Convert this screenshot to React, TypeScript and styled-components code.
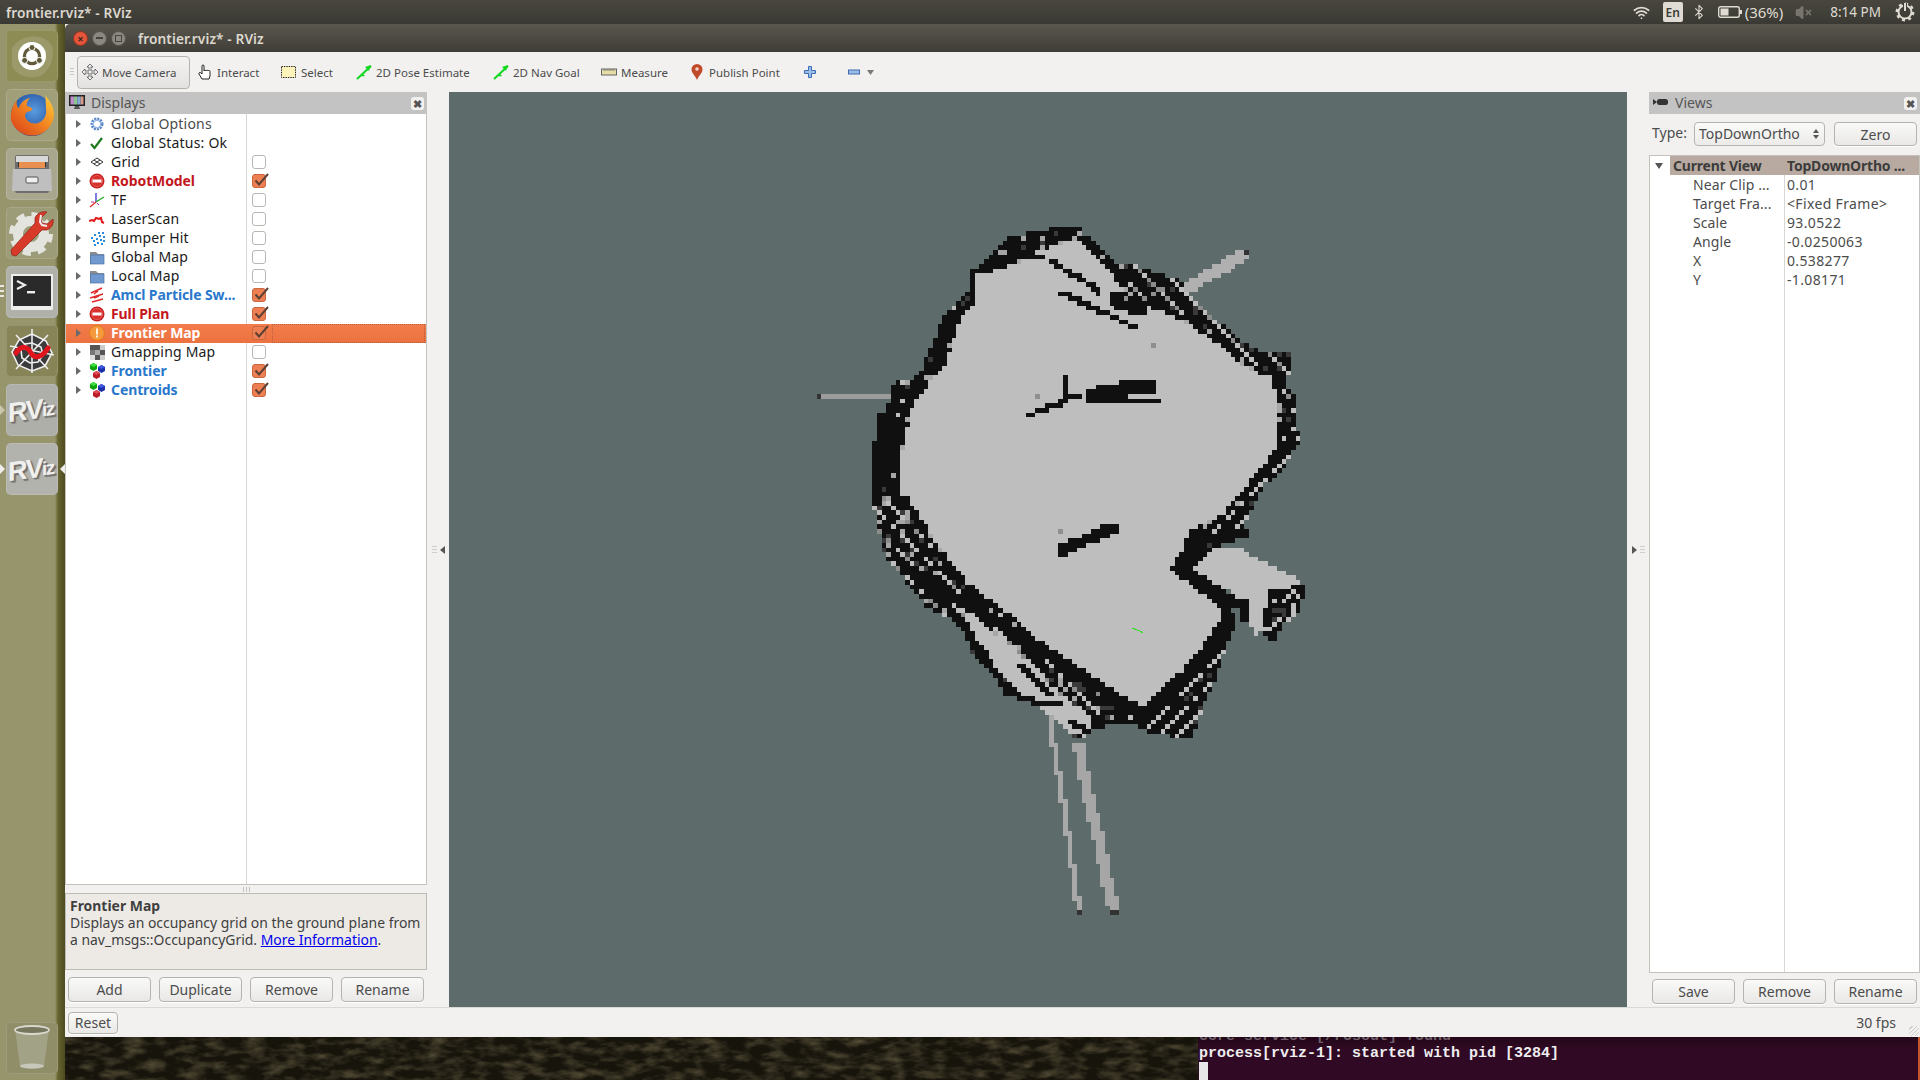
import React, { useMemo } from "react";
import styled, { createGlobalStyle } from "styled-components";
import { Wifi, Bluetooth, VolumeX } from "lucide-react";

const Global = createGlobalStyle`
  html, body { margin: 0; padding: 0; width: 1920px; height: 1080px; overflow: hidden; background: #1c1810; }
  * { box-sizing: border-box; }
`;
const UI = `"Noto Sans", "Open Sans", sans-serif`;

const Root = styled.div`
  width: 1920px; height: 1080px; display: flex; flex-direction: column; overflow: hidden; font-family: ${UI};
`;
const TopPanel = styled.header`
  height: 24px; flex: none; display: flex; align-items: center; padding: 0 5px 0 6px;
  background: linear-gradient(#48463f, #3a3933); color: #dfdbd2;
`;
const PanelTitle = styled.span`font-size: 13.7px; font-weight: 600; letter-spacing: .1px; color: #dcd8cf;`;
const Indicators = styled.div`margin-left: auto; display: flex; align-items: center; height: 24px; color: #dfdbd2; font-size: 14px;`;
const LangBox = styled.span`
  width: 20px; height: 20px; background: #dfdbd2; color: #3c3b37; border-radius: 2px; font-size: 12px; font-weight: 600;
  display: flex; align-items: center; justify-content: center; margin: 0 8px 0 13px;
`;
const IndicatorText = styled.span<{ $l: number; $r: number; $s?: number }>`margin: 0 ${p => p.$r}px 0 ${p => p.$l}px; white-space: nowrap; font-size: ${p => p.$s ?? 13.5}px;`;
const Body = styled.div`flex: 1; display: flex; min-height: 0;`;
const Launcher = styled.nav`
  width: 65px; flex: none; display: flex; flex-direction: column; padding: 6px 7px 6px 6px; gap: 7px;
  background: linear-gradient(90deg, #96956b 0, #96956b 55px, #66642f 58px, #4d4b20 65px);
`;
const Tile = styled.div<{ $bg: string }>`
  width: 52px; height: 52px; flex: none; border-radius: 5px; position: relative; background: ${p => p.$bg};
  display: flex; align-items: center; justify-content: center; box-shadow: inset 0 0 0 1px rgba(255,255,255,.12);
`;
const TrashTile = styled(Tile)`margin-top: auto;`;
const Pip = styled.span<{ $side: "l" | "r"; $hollow?: boolean }>`
  position: absolute; top: 21px; ${p => p.$side === "l" ? "left: -6px" : "right: -7px"}; width: 0; height: 0;
  border-top: 5px solid transparent; border-bottom: 5px solid transparent;
  ${p => p.$side === "l" ? `border-left: 5px solid ${p.$hollow ? "#c9c8ae" : "#eee"}` : "border-right: 5px solid #eee"};
`;
const PipDots = styled.span`
  position: absolute; left: -6px; top: 19px; width: 4px; height: 12px;
  background: repeating-linear-gradient(#e8e8e0 0 2px, transparent 2px 5px);
`;
const RvizMark = styled.span`
  display: flex; align-items: flex-end; transform: skewY(-8deg); font-family: "Liberation Sans", sans-serif; font-weight: 700;
  color: #f0f0ee; text-shadow: 1px 1px 0 #777, 2px 2px 1px #6a6a6a; letter-spacing: -1.5px; padding-right: 2px;
`;
const RvizBig = styled.span`font-size: 27px; line-height: 28px;`;
const RvizSmall = styled.span`font-size: 19px; line-height: 24px;`;
const Main = styled.div`flex: 1; display: flex; flex-direction: column; min-width: 0;`;
const Win = styled.div`height: 1013px; flex: none; display: flex; flex-direction: column; background: #f2f1f0;`;
const TitleBar = styled.div`
  height: 28px; flex: none; display: flex; align-items: center; padding-left: 8px;
  background: linear-gradient(#5a574e, #3f3d37); border-top-left-radius: 5px;
`;
const WinBtn = styled.span<{ $bg: string }>`
  width: 15px; height: 15px; border-radius: 50%; background: ${p => p.$bg}; margin-right: 4px; border: 1px solid rgba(0,0,0,.35);
  display: flex; align-items: center; justify-content: center; color: #3b2a20; font-size: 11px; line-height: 1; font-weight: 700;
`;
const WinDash = styled.span`width: 7px; height: 2px; background: #45433d;`;
const WinSquare = styled.span`width: 7px; height: 7px; border: 1px solid #45433d;`;
const WinTitle = styled.span`margin-left: 8px; font-size: 13.7px; font-weight: 600; color: #dcd8cf; letter-spacing: .1px;`;
const ToolBar = styled.div`height: 40px; flex: none; display: flex; align-items: center; padding-left: 5px; color: #4c4c4c; font-size: 11.5px;`;
const Handle = styled.span`width: 4px; height: 9px; margin-right: 3px; background: repeating-linear-gradient(#c8c6c2 0 1px, transparent 1px 3px);`;
const MoveBtn = styled.div`
  width: 113px; height: 33px; display: flex; align-items: center; gap: 4px; padding-left: 4px; margin-right: 7px;
  border: 1px solid #b5b3ae; border-radius: 4px; background: linear-gradient(#f4f3f2, #e3e2e0);
`;
const Tool = styled.div<{ $w: number; $gap?: number }>`width: ${p => p.$w}px; flex: none; display: flex; align-items: center; gap: ${p => p.$gap ?? 4}px; white-space: nowrap;`;
const Work = styled.div`height: 915px; flex: none; display: flex;`;
const Dock = styled.section<{ $w: number }>`width: ${p => p.$w}px; flex: none; display: flex; flex-direction: column;`;
const DockTitle = styled.div`
  height: 22px; flex: none; display: flex; align-items: center; gap: 6px; padding: 0 0 2px 4px; background: #c3c3c3;
  color: #555; font-size: 14px; position: relative;
`;
const CloseBtn = styled.span`
  position: absolute; right: 3px; top: 5px; width: 13px; height: 13px; border-radius: 3px; background: #f2f1f0;
  display: flex; align-items: center; justify-content: center; color: #555; font-size: 11px; font-weight: 800; line-height: 1;
`;
const Tree = styled.div`
  height: 771px; flex: none; background: #fff; border: 1px solid #c4c2bd; border-top: 0; position: relative; font-size: 14px; padding-top: 1px; line-height: 18px;
`;
const ColLine = styled.span<{ $x: number }>`position: absolute; top: 0; bottom: 0; left: ${p => p.$x}px; width: 1px; background: #d8d6d2;`;
const Row = styled.div<{ $sel?: boolean }>`
  height: 19px; display: flex; align-items: center; position: relative; padding-bottom: 1px;
  background: ${p => p.$sel ? "linear-gradient(#f37c4c, #ec7240)" : "transparent"};
`;
const Arrow = styled.span<{ $down?: boolean }>`
  width: 0; height: 0; flex: none;
  ${p => p.$down ? `border-left: 4px solid transparent; border-right: 4px solid transparent; border-top: 6px solid #555;` :
    `border-top: 4px solid transparent; border-bottom: 4px solid transparent; border-left: 5px solid #6a6a6a;`}
`;
const ArrowSlot = styled.span`width: 23px; flex: none; display: flex; justify-content: flex-end; padding-right: 8px;`;
const IconSlot = styled.span`width: 22px; height: 17px; flex: none; display: flex; align-items: center;`;
const Label = styled.span<{ $c: string; $b?: boolean }>`
  width: 135px; flex: none; white-space: nowrap; color: ${p => p.$c}; font-weight: ${p => p.$b ? 700 : 400};
  letter-spacing: ${p => p.$b ? "-.1px" : ".2px"};
`;
const CheckCell = styled.span<{ $sel?: boolean }>`
  width: 179px; flex: none; padding-left: 6px; height: 18px; display: flex; align-items: center; position: relative;
`;
const Focus = styled.span`position: absolute; left: 26px; right: 0; top: 0; bottom: -1px; border: 1px dotted #b3603a;`;
const Box = styled.span<{ $on?: boolean }>`
  width: 14px; height: 14px; border-radius: 3px; position: relative; display: block; flex: none;
  background: ${p => p.$on ? "#ee7f52" : "#fff"}; border: 1px solid ${p => p.$on ? "#c9673f" : "#b9b7b2"};
`;
const Tick = styled.svg`position: absolute; left: 0; top: -3px;`;
const Grip = styled.div`height: 8px; flex: none; display: flex; justify-content: center; align-items: center;`;
const GripMark = styled.span`width: 7px; height: 5px; background: repeating-linear-gradient(90deg, #c3c1bc 0 1px, transparent 1px 3px);`;
const Help = styled.div`
  height: 77px; flex: none; background: #edeae6; border: 1px solid #bdbbb6; padding: 3px 4px; font-size: 13.95px; line-height: 17px; color: #3f3f3f; white-space: nowrap;
`;
const HelpHead = styled.div`font-weight: 700;`;
const HelpLink = styled.a`color: #0000ee; text-decoration: underline;`;
const BtnRow = styled.div<{ $pt: number; $pl: number }>`display: flex; gap: 8px; padding: ${p => p.$pt}px 0 0 ${p => p.$pl}px;`;
const Btn = styled.button<{ $w?: number; $h?: number }>`
  width: ${p => p.$w ?? 83}px; height: ${p => p.$h ?? 25}px; padding: 0; flex: none; border: 1px solid #b5b3ae; border-radius: 4px;
  background: linear-gradient(#f9f9f8, #e9e8e6); color: #4c4c4c; font-family: ${UI}; font-size: 14px; box-shadow: 0 1px 0 #fff;
`;
const Splitter = styled.div<{ $w: number }>`width: ${p => p.$w}px; flex: none; display: flex; align-items: center; justify-content: center; gap: 3px;`;
const SplitArrow = styled.span<{ $dir: "l" | "r" }>`
  width: 0; height: 0; border-top: 4px solid transparent; border-bottom: 4px solid transparent;
  ${p => p.$dir === "l" ? "border-right: 5px solid #555" : "border-left: 5px solid #555"};
`;
const SplitGrip = styled.span`width: 5px; height: 8px; background: repeating-linear-gradient(#cfcdc9 0 1px, transparent 1px 3px);`;
const Viewport = styled.div`width: 1178px; flex: none; background: #5d6b6b; overflow: hidden;`;
const MapSvg = styled.svg`display: block;`;
const TypeRow = styled.div`height: 41px; flex: none; display: flex; align-items: flex-start; padding: 8px 0 0 3px; color: #4c4c4c; font-size: 14px; line-height: 22px;`;
const TypeLabel = styled.span`width: 42px; flex: none;`;
const Combo = styled.div`
  width: 131px; height: 24px; flex: none; margin-right: 9px; border: 1px solid #b5b3ae; border-radius: 4px; background: linear-gradient(#fafafa, #ecebe9);
  display: flex; align-items: center; justify-content: space-between; padding: 0 5px 0 4px; font-size: 14px;
`;
const Spin = styled.span`display: flex; flex-direction: column; gap: 2px;`;
const SpinUp = styled.span`width: 0; height: 0; border: 3px solid transparent; border-top: 0; border-bottom: 4px solid #555;`;
const SpinDown = styled.span`width: 0; height: 0; border: 3px solid transparent; border-bottom: 0; border-top: 4px solid #555;`;
const ViewTree = styled(Tree)`height: 818px; border-top: 1px solid #c4c2bd; padding-top: 0;`;
const ViewHead = styled.div`
  height: 19px; display: flex; align-items: center; font-weight: 700; color: #3c3c3c; position: relative; font-size: 14px;
`;
const HeadArrowSlot = styled.span`width: 20px; flex: none; display: flex; justify-content: center; padding-right: 2px;`;
const HeadCell = styled.span<{ $w: number }>`width: ${p => p.$w}px; flex: none; background: #b8aaa0; height: 19px; line-height: 19px; padding-left: 3px; white-space: nowrap; overflow: hidden; letter-spacing: -.2px;`;
const ViewRow = styled.div`height: 19px; display: flex; align-items: center; color: #4c4c4c;`;
const ViewKey = styled.span`width: 134px; flex: none; padding-left: 43px; white-space: nowrap; letter-spacing: .1px;`;
const ViewVal = styled.span`padding-left: 3px; white-space: nowrap; letter-spacing: .35px;`;
const Status = styled.footer`
  height: 30px; flex: none; border-top: 1px solid #dbd9d5; display: flex; align-items: center; padding: 0 24px 0 3px; justify-content: space-between; position: relative;
  color: #4c4c4c; font-size: 14px;
`;
const SizeGrip = styled.span`
  position: absolute; right: 1px; bottom: 1px; width: 10px; height: 10px;
  background: repeating-linear-gradient(135deg, transparent 0 2px, #cfcdc9 2px 3px);
`;
const Bottom = styled.div`height: 43px; flex: none; display: flex;`;
const Wallpaper = styled.div`width: 1133px; flex: none; background: #17140c; overflow: hidden;`;
const Terminal = styled.div`
  flex: 1; position: relative; overflow: hidden; background: linear-gradient(#230718, #300a24 12px); border-right: 2px solid #c4552c;
  font-family: "Liberation Mono", monospace; font-size: 15px; font-weight: 700; line-height: 17px; color: #eee;
  padding-left: 1px;
`;
const Clipped = styled.div`margin-top: -9px; color: #6e5d68;`;
const Cursor = styled.div`width: 9px; height: 18px; background: #e8e8e8;`;

/* ------------- occupancy map --------------- */
type Pt = [number, number];
const OUTER: Pt[] = [[1078,225],[1083,233],[1117,262],[1145,268],[1179,280],[1190,297],[1210,315],[1245,343],[1265,352],[1290,350],[1291,367],[1286,387],[1297,400],[1293,427],[1302,437],[1293,450],[1283,470],[1262,487],[1248,515],[1243,535],[1213,548],[1237,625],[1227,643],[1215,680],[1203,707],[1193,737],[1180,737],[1153,733],[1127,723],[1100,727],[1093,727],[1087,738],[1077,741],[1067,733],[1060,713],[1033,703],[1002,695],[1000,680],[987,670],[968,648],[970,635],[957,623],[927,607],[903,577],[887,557],[881,543],[876,520],[871,483],[874,467],[883,443],[888,407],[895,380],[919,377],[924,360],[938,333],[941,317],[969,293],[969,273],[991,255],[1007,237],[1059,227]];
const INNER: Pt[] = [[1083,238],[1110,265],[1131,297],[1179,315],[1214,337],[1245,363],[1276,377],[1281,417],[1281,447],[1245,493],[1224,517],[1190,533],[1186,550],[1174,567],[1207,590],[1227,613],[1210,640],[1190,667],[1143,712],[1100,690],[1050,653],[1003,613],[967,587],[940,553],[907,503],[897,493],[898,467],[902,433],[912,400],[942,363],[958,317],[974,297],[974,273],[1010,263],[1041,247],[1079,235]];
const LOBE: Pt[] = [[1213,548],[1237,547],[1300,580],[1305,590],[1268,592],[1262,628],[1258,638],[1247,622],[1243,600],[1193,570]];
const SWLIGHT: Pt[] = [[960,603],[1003,640],[1063,697],[1093,717],[1087,733],[1067,731],[1010,680],[975,638]];
const PATCH: Pt[] = [[1268,590],[1305,585],[1300,612],[1285,622],[1274,640],[1262,636],[1265,610]];
const WALLS: { pts: Pt[]; t: number }[] = [
  { pts: INNER.concat([INNER[0]]), t: 1 },
  { pts: [[1062,293],[1093,307],[1136,328]], t: 1 },
  { pts: [[1053,263],[1086,282],[1100,292]], t: 1 },
  { pts: [[1118,300],[1140,308]], t: 3 },
  { pts: [[1028,415],[1064,402],[1067,380]], t: 1 },
  { pts: [[1065,395],[1079,395]], t: 1 },
  { pts: [[1093,397],[1117,390],[1147,387]], t: 3 },
  { pts: [[1102,402],[1160,402]], t: 1 },
  { pts: [[1059,548],[1112,525]], t: 2 },
  { pts: [[1014,257],[1041,255]], t: 1 },
  { pts: [[903,567],[1000,622],[1140,713]], t: 2 },
  { pts: [[1177,567],[1213,593],[1243,603],[1243,617]], t: 2 },
  { pts: [[1227,623],[1170,690],[1143,713]], t: 2 },
  { pts: [[1240,532],[1190,540],[1180,560]], t: 2 },
  { pts: [[885,420],[878,480]], t: 3 },
  { pts: [[950,612],[975,642],[1003,684],[1006,693],[1040,703],[1062,705]], t: 1 },
  { pts: [[1020,665],[1052,695]], t: 1 },
  { pts: [[1070,722],[1088,730]], t: 1 },
];
const RAYS: { pts: Pt[]; t: number; c: string }[] = [
  { pts: [[1186,285],[1215,268],[1244,250]], t: 2, c: "#b0b0b0" },
  { pts: [[821,396],[852,396],[900,399]], t: 1, c: "#9c9c9c" },
  { pts: [[1050,713],[1054,745],[1063,800],[1068,835],[1076,890],[1078,908]], t: 1, c: "#a8a8a8" },
  { pts: [[1077,745],[1085,790],[1097,840],[1105,880],[1113,910]], t: 2, c: "#a6a6a6" },
];
const TIPS: Pt[] = [[1247,250],[1078,911],[1113,914],[1116,914],[818,396]];
const GRAY: Pt[] = [[1038,395],[1060,529],[1128,300],[1152,345],[1156,292],[1162,290]];
const C = 4.65, X0 = 812, Y0 = 222;

const inside = (p: Pt, poly: Pt[]) => {
  let c = false;
  for (let a = 0, b = poly.length - 1; a < poly.length; b = a++) {
    const [xa, ya] = poly[a], [xb, yb] = poly[b];
    if ((ya > p[1]) !== (yb > p[1]) && p[0] < ((xb - xa) * (p[1] - ya)) / (yb - ya) + xa) c = !c;
  }
  return c;
};
const rnd = (i: number, j: number) => {
  let h = Math.imul(i + 31, 73856093) ^ Math.imul(j + 17, 19349663);
  h = Math.imul(h ^ (h >>> 13), 1274126177);
  return (((h ^ (h >>> 16)) >>> 0) % 1000) / 1000;
};
const buildMap = () => {
  const cells = new Map<string, string>();
  const key = (i: number, j: number) => `${i},${j}`;
  const L = "#bebebe", B = "#101010";
  for (let j = 0; j < 115; j++) for (let i = 0; i < 110; i++) {
    const p: Pt = [X0 + (i + .5) * C, Y0 + (j + .5) * C];
    const r = rnd(i, j);
    if (inside(p, PATCH)) { cells.set(key(i, j), r < .72 ? B : r < .85 ? "#3a3a3a" : L); continue; }
    if (inside(p, INNER) || inside(p, LOBE) || inside(p, SWLIGHT)) { cells.set(key(i, j), L); continue; }
    if (!inside(p, OUTER)) continue;
    let c = B;
    const se = p[0] > 1140 && p[1] > 450;
    const sw = p[1] > 490 && p[0] < 1100;
    const ne = p[0] > 1130 && p[1] < 400;
    if (se) c = (i + j) % 4 === 0 ? (r < .75 ? L : B) : r < .9 ? B : "#3a3a3a";
    else if (sw) c = (i - j) % 4 === 0 ? (r < .7 ? L : r < .85 ? "#8c8c8c" : B) : r < .82 ? B : r < .92 ? "#3a3a3a" : "#a6a6a6";
    else if (ne) c = (i - j) % 5 === 0 ? (r < .7 ? L : "#8c8c8c") : r < .9 ? B : "#3a3a3a";
    else c = r < .86 ? B : r < .93 ? "#3a3a3a" : r < .97 ? "#a6a6a6" : L;
    cells.set(key(i, j), c);
  }
  const stroke = (pts: Pt[], t: number, fn: (i: number, j: number) => void) => {
    const lo = -Math.floor((t - 1) / 2), hi = Math.ceil((t - 1) / 2);
    for (let s = 0; s < pts.length - 1; s++) {
      const [a, b] = [pts[s], pts[s + 1]];
      const n = Math.ceil(Math.hypot(b[0] - a[0], b[1] - a[1]));
      for (let k = 0; k <= n; k++) {
        const x = a[0] + ((b[0] - a[0]) * k) / n, y = a[1] + ((b[1] - a[1]) * k) / n;
        const i = Math.floor((x - X0) / C), j = Math.floor((y - Y0) / C);
        for (let dy = lo; dy <= hi; dy++) for (let dx = lo; dx <= hi; dx++) fn(i + dx, j + dy);
      }
    }
  };
  WALLS.forEach(w => stroke(w.pts, w.t, (i, j) => {
    const bad = w.t === 1 && w.pts.length > 20 && rnd(i * 3, j * 7) < .1;
    cells.set(key(i, j), bad ? "#a8a8a8" : B);
  }));
  RAYS.forEach(r => stroke(r.pts, r.t, (i, j) => { if (!cells.has(key(i, j))) cells.set(key(i, j), r.c); }));
  const mark = (p: Pt, c: string) => cells.set(key(Math.floor((p[0] - X0) / C), Math.floor((p[1] - Y0) / C)), c);
  TIPS.forEach(p => mark(p, "#333"));
  GRAY.forEach(p => mark(p, "#8f8f8f"));
  const paths: Record<string, string> = {};
  cells.forEach((c, k) => {
    const [i, j] = k.split(",").map(Number);
    const x = Math.round(X0 + i * C), y = Math.round(Y0 + j * C);
    const w = Math.round(X0 + (i + 1) * C) - x, h = Math.round(Y0 + (j + 1) * C) - y;
    paths[c] = (paths[c] || "") + `M${x} ${y}h${w}v${h}h-${w}z`;
  });
  return paths;
};
const OccupancyMap = () => {
  const paths = useMemo(buildMap, []);
  return (
    <MapSvg width={1178} height={915} viewBox="449 92 1178 915" shapeRendering="crispEdges">
      {Object.entries(paths).map(([c, d]) => <path key={c} d={d} fill={c} />)}
      <path d="M1132 628l5 2 2 0 4 3" stroke="#33dd22" fill="none" strokeWidth="1" />
    </MapSvg>
  );
};
const WallpaperTexture = () => (
  <svg width="1133" height="43" style={{ display: "block" }}>
    <filter id="wp" x="0" y="0" width="100%" height="100%">
      <feTurbulence type="fractalNoise" baseFrequency=".05 .12" numOctaves="3" seed="4" />
      <feColorMatrix values="0 0 0 0 .17  0 0 0 0 .145  0 0 0 0 .07  1.3 0 0 0 -.52" />
    </filter>
    <rect width="1133" height="43" filter="url(#wp)" />
  </svg>
);

/* ------------- icons --------------- */
const Ico = ({ s = 16, children, w }: { s?: number; w?: number; children: React.ReactNode }) => (
  <svg width={w ?? s} height={s} viewBox={`0 0 ${w ?? s} ${s}`} style={{ display: "block", flex: "none" }}>{children}</svg>
);
const IGear = () => <Ico><circle cx="8" cy="8" r="5" fill="none" stroke="#5b88c8" strokeWidth="3" strokeDasharray="2 .9" /><circle cx="8" cy="8" r="3.6" fill="none" stroke="#9bbbe4" strokeWidth="1.2" /></Ico>;
const ICheckG = () => <Ico><path d="M2 9l3.5 4L13 3" fill="none" stroke="#1f7a1f" strokeWidth="2.2" /></Ico>;
const IGrid = () => <Ico><path d="M8 4l6 4-6 4-6-4zM5 6l6 4M11 6l-6 4" fill="none" stroke="#333" strokeWidth="1" /></Ico>;
const IStop = () => <Ico><circle cx="8" cy="8" r="7.5" fill="#c8201f" /><circle cx="8" cy="8" r="5.6" fill="#d9302e" stroke="#f08a88" strokeWidth=".5" /><rect x="3.5" y="6.5" width="9" height="3" fill="#fff" /></Ico>;
const IWarn = () => <Ico><circle cx="8" cy="8" r="7.5" fill="#f49a3c" stroke="#e07a1c" /><rect x="7" y="3.5" width="2" height="6" fill="#fff2d8" /><rect x="7" y="10.5" width="2" height="2" fill="#fff2d8" /></Ico>;
const ITf = () => <Ico><path d="M7 10V1" stroke="#2222cc" strokeWidth="1.2" /><path d="M7 10l8-5" stroke="#22aa22" strokeWidth="1.2" /><path d="M7 10l-6 5" stroke="#dd2222" strokeWidth="1.2" /><path d="M2 10h3M10 13l-2-2" stroke="#aa33aa" strokeWidth="1" /></Ico>;
const ILaser = () => <Ico><path d="M0 10l3-1 2 1 2-3 3 1 2-1 1 4 2 1" fill="none" stroke="#e01818" strokeWidth="2" /></Ico>;
const IBumper = () => <Ico>{[[9,2],[13,2],[5,4],[10,5],[14,6],[2,7],[7,8],[11,9],[4,10],[14,10],[8,12],[12,13],[5,14]].map(([x, y], i) => <rect key={i} x={x} y={y} width="2" height="2" fill="#2a8ae0" />)}</Ico>;
const IFolder = () => <Ico><path d="M1 3h6l2 2h6v10H1z" fill="#8d8d8d" /><rect x="1.5" y="6" width="13.5" height="9" fill="#6f99cf" stroke="#4c74a8" strokeWidth=".7" /></Ico>;
const IAmcl = () => <Ico><path d="M2 6l11-5M9 4L5 7M1 11l13-4M10 9l-5 2M3 15l11-3" fill="none" stroke="#e02a2a" strokeWidth="1.5" /></Ico>;
const IGmap = () => <Ico>{[[1,1,"#555"],[6,1,"#555"],[11,1,"#ccc"],[1,6,"#777"],[6,6,"#aaa"],[11,6,"#555"],[1,11,"#ddd"],[6,11,"#555"],[11,11,"#ccc"]].map(([x, y, c], i) => <rect key={i} x={x as number} y={y as number} width="5" height="5" fill={c as string} />)}</Ico>;
const Cube = ({ x, y, c, d }: { x: number; y: number; c: string; d: string }) => <g transform={`translate(${x} ${y})`}><path d="M3.5 0L7 2v4L3.5 8 0 6V2z" fill={c} /><path d="M0 2l3.5 2L7 2 3.5 0z" fill={d} /></g>;
const IMarker = () => <Ico><Cube x={1} y={0} c="#0da50d" d="#3fe03f" /><Cube x={9} y={2} c="#1a2fa8" d="#3f5ae0" /><Cube x={4} y={8} c="#b81c28" d="#e04a55" /></Ico>;
const IMonitor = () => <Ico><rect x="0" y="1" width="16" height="11" fill="#222" /><rect x="1.5" y="2.5" width="3.4" height="8" fill="#c58ad0" /><rect x="4.9" y="2.5" width="3.4" height="8" fill="#8ac78e" /><rect x="8.3" y="2.5" width="3.4" height="8" fill="#88a8d8" /><rect x="11.7" y="2.5" width="2.8" height="8" fill="#d89a88" /><path d="M5 15h6l-1-3H6z" fill="#555" /></Ico>;
const ICam = () => <Ico><path d="M0 5l4 3-4 3z" fill="#333" /><rect x="4" y="5" width="11" height="6" rx="2.5" fill="#333" /></Ico>;
const IMove = () => <Ico><path d="M8 0l3 3H9v4h4V5l3 3-3 3V9H9v4h2l-3 3-3-3h2V9H3v2L0 8l3-3v2h4V3H5z" fill="#eee" stroke="#555" strokeWidth=".8" /></Ico>;
const IHand = () => <Ico><path d="M5 15l-3-5c-.6-1.4 1-2 2-1l1 1V2c0-1.4 2-1.4 2 0v5c0-1 2-1 2 0 0-1 2-1 2 0 0-.8 2-.8 2 .4V12l-1 3z" fill="#fff" stroke="#222" strokeWidth="1" /></Ico>;
const ISelect = () => <Ico><rect x=".5" y="2.5" width="14" height="11" fill="#fbf3ba" stroke="#222" strokeWidth="1" strokeDasharray="1.4 1" /></Ico>;
const IArrow = () => <Ico><path d="M1 15L15 2" stroke="#0fd81f" strokeWidth="2" /><path d="M15 1l-6 2 4 4z" fill="#0fd81f" /><path d="M6 9l3 3-3 .5z" fill="#0fd81f" /></Ico>;
const IRuler = () => <Ico><rect x=".5" y="5" width="15" height="6" fill="#e5dca8" stroke="#666" /><path d="M3 5v2M5 5v2M7 5v2M9 5v2M11 5v2M13 5v2" stroke="#666" strokeWidth=".7" /></Ico>;
const IPin = () => <Ico w={12} s={16}><path d="M6 16C4 11 .5 9 .5 5.5a5.5 5.5 0 0 1 11 0C11.5 9 8 11 6 16z" fill="#c0492a" /><circle cx="6" cy="5" r="1.8" fill="#f3d8c8" /></Ico>;
const IPlus = () => <Ico s={12}><path d="M4.5 .5h3v4h4v3h-4v4h-3v-4h-4v-3h4z" fill="#9cbde6" stroke="#3a6fb5" /></Ico>;
const IMinus = () => <Ico s={12}><rect x=".5" y="4" width="11" height="4" fill="#9cbde6" stroke="#3a6fb5" /></Ico>;
const IMenuDown = () => <Ico s={8}><path d="M0 2h7L3.5 7z" fill="#777" /></Ico>;

const UbuntuGlyph = () => (
  <svg width="52" height="52" viewBox="0 0 52 52">
    <path d="M6 18C14 4 38 2 46 16c3 10-1 24-12 30-10 3-22 1-28-10z" fill="#a8a67e" opacity=".55" />
    <circle cx="26" cy="26" r="14" fill="#fff" />
    <circle cx="26" cy="26" r="7.6" fill="none" stroke="#5f5a3a" strokeWidth="3.2" />
    <circle cx="26" cy="17.5" r="3" fill="#5f5a3a" stroke="#fff" /><circle cx="18.6" cy="30.4" r="3" fill="#5f5a3a" stroke="#fff" /><circle cx="33.4" cy="30.4" r="3" fill="#5f5a3a" stroke="#fff" />
  </svg>
);
const FirefoxGlyph = () => (
  <svg width="46" height="46" viewBox="0 0 46 46">
    <defs><radialGradient id="ffb" cx=".55" cy=".4" r=".6"><stop offset="0" stopColor="#5a9ce0" /><stop offset="1" stopColor="#1f4a98" /></radialGradient>
      <linearGradient id="fff" x1="1" y1="0" x2="0" y2="1"><stop offset="0" stopColor="#ffd23a" /><stop offset=".5" stopColor="#f08020" /><stop offset="1" stopColor="#d83a18" /></linearGradient></defs>
    <circle cx="23" cy="23" r="21" fill="url(#ffb)" />
    <path d="M36 3c3 4 9 10 9 20a22 22 0 0 1-43 5C1 20 4 12 8 8c-1 4 0 7 2 8 1-5 6-9 11-10-3 3-4 6-3 8 3 1 6 2 5 4-2 2-6 1-7 5 0 6 7 10 13 8 6-2 9-8 8-14 0-5-1-10 0-14z" fill="url(#fff)" />
  </svg>
);
const FilesGlyph = () => (
  <svg width="44" height="44" viewBox="0 0 44 44">
    <rect x="5" y="3" width="34" height="38" rx="2" fill="#6d6d6d" /><rect x="6" y="4" width="32" height="6" fill="#d8d8d8" />
    <rect x="8" y="10" width="28" height="5" fill="#333" /><rect x="9" y="10" width="26" height="6" fill="#e89050" />
    <path d="M3 17h38l1 22H2z" fill="#bfbfbf" /><rect x="16" y="25" width="12" height="6" rx="1" fill="#eee" stroke="#555" />
  </svg>
);
const ToolsGlyph = () => (
  <svg width="48" height="48" viewBox="0 0 48 48">
    <circle cx="23" cy="25" r="13" fill="none" stroke="#e4e4df" strokeWidth="10" />
    <circle cx="23" cy="25" r="19" fill="none" stroke="#e4e4df" strokeWidth="6" strokeDasharray="8 6.9" />
    <path d="M4 46l4 1 26-26 5 0c5-2 7-7 6-11l-6 5-5-1-1-5 6-6c-5-1-10 1-12 6l0 5L3 41z" fill="#d83a2a" stroke="#8d2018" strokeWidth=".7" />
    <path d="M33 6l-1 7 2 3 5 1" fill="none" stroke="#eee" strokeWidth="2" />
  </svg>
);
const TerminalGlyph = () => (
  <svg width="42" height="36" viewBox="0 0 42 36">
    <rect x="0" y="0" width="42" height="36" rx="1" fill="#eee" /><rect x="2" y="2" width="38" height="30" fill="#2a2a2a" />
    <path d="M6 7l8 4-8 4" fill="none" stroke="#eee" strokeWidth="2" /><rect x="16" y="17" width="8" height="2.4" fill="#eee" />
  </svg>
);
const WebGlyph = () => (
  <svg width="44" height="44" viewBox="0 0 44 44">
    <path d="M22 5l14 7 6 12-7 13-13 5-14-6L2 23l7-12z" fill="#3b3b3b" />
    <g stroke="#eee" strokeWidth="1.6" fill="none">
      <path d="M22 0v44M0 17l44 9M6 40L38 6M6 6l32 34M22 5l14 7 6 12-7 13-13 5-14-6L2 23l7-12z" />
      <path d="M22 14l9 4 2 8-5 7-8 1-8-5-1-8 4-6z" />
    </g>
    <path d="M6 24c6-9 12-6 15 0s11 5 17-5" stroke="#e0141c" strokeWidth="5" fill="none" strokeLinecap="round" />
  </svg>
);
const TrashGlyph = () => (
  <svg width="40" height="48" viewBox="0 0 40 48">
    <path d="M3 6l5 36c0 4 24 4 24 0l5-36z" fill="#a2a286" />
    <ellipse cx="20" cy="6" rx="17" ry="4" fill="#77775f" stroke="#d8d8cc" strokeWidth="1.8" />
    <ellipse cx="20" cy="42" rx="12" ry="2.6" fill="#c8c8ba" />
  </svg>
);
const BatteryIco = () => <Ico w={24} s={14}><rect x=".7" y="1.7" width="20.6" height="10.6" rx="2" fill="none" stroke="#dfdbd2" strokeWidth="1.4" /><rect x="2.5" y="3.5" width="8" height="7" fill="#dfdbd2" /><rect x="22" y="5" width="2" height="4" fill="#dfdbd2" /></Ico>;
const SessionIco = () => (
  <Ico s={20}>
    <circle cx="10" cy="10" r="6.5" fill="none" stroke="#dfdbd2" strokeWidth="2" />
    <circle cx="10" cy="10" r="8.2" fill="none" stroke="#dfdbd2" strokeWidth="2.4" strokeDasharray="3 3.4" />
    <path d="M10 1v8" stroke="#3e3c37" strokeWidth="4" /><path d="M10 1v8" stroke="#dfdbd2" strokeWidth="2" />
  </Ico>
);
const TickMark = () => (
  <Tick width="18" height="16" viewBox="0 0 18 16"><path d="M2.5 8.5l3.5 4L15 2" fill="none" stroke="#5b4033" strokeWidth="2" /></Tick>
);

/* ------------- data --------------- */
const RED = "#c4161c", BLUE = "#2a78cc", TXT = "#1a1a1a";
type D = { icon: React.ComponentType; text: string; color: string; bold?: boolean; box?: "on" | "off"; sel?: boolean };
const DISPLAYS: D[] = [
  { icon: IGear, text: "Global Options", color: "#4c4c4c" },
  { icon: ICheckG, text: "Global Status: Ok", color: TXT },
  { icon: IGrid, text: "Grid", color: TXT, box: "off" },
  { icon: IStop, text: "RobotModel", color: RED, bold: true, box: "on" },
  { icon: ITf, text: "TF", color: TXT, box: "off" },
  { icon: ILaser, text: "LaserScan", color: TXT, box: "off" },
  { icon: IBumper, text: "Bumper Hit", color: TXT, box: "off" },
  { icon: IFolder, text: "Global Map", color: TXT, box: "off" },
  { icon: IFolder, text: "Local Map", color: TXT, box: "off" },
  { icon: IAmcl, text: "Amcl Particle Sw...", color: BLUE, bold: true, box: "on" },
  { icon: IStop, text: "Full Plan", color: RED, bold: true, box: "on" },
  { icon: IWarn, text: "Frontier Map", color: "#fff", bold: true, box: "on", sel: true },
  { icon: IGmap, text: "Gmapping Map", color: TXT, box: "off" },
  { icon: IMarker, text: "Frontier", color: BLUE, bold: true, box: "on" },
  { icon: IMarker, text: "Centroids", color: BLUE, bold: true, box: "on" },
];
const VIEW_ROWS: [string, string][] = [["Near Clip ...", "0.01"], ["Target Fra...", "<Fixed Frame>"], ["Scale", "93.0522"], ["Angle", "-0.0250063"], ["X", "0.538277"], ["Y", "-1.08171"]];
const TOOLS: { icon: React.ComponentType; text: string; w: number; gap?: number }[] = [
  { icon: IHand, text: "Interact", w: 84 },
  { icon: ISelect, text: "Select", w: 75 },
  { icon: IArrow, text: "2D Pose Estimate", w: 137 },
  { icon: IArrow, text: "2D Nav Goal", w: 108 },
  { icon: IRuler, text: "Measure", w: 90 },
  { icon: IPin, text: "Publish Point", w: 113, gap: 6 },
];

export default function App() {
  return (
    <Root>
      <Global />
      <TopPanel>
        <PanelTitle>frontier.rviz* - RViz</PanelTitle>
        <Indicators>
          <Wifi size={17} strokeWidth={2.4} />
          <LangBox>En</LangBox>
          <Bluetooth size={16} strokeWidth={1.6} />
          <IndicatorText $l={11} $r={3}><BatteryIco /></IndicatorText>
          <IndicatorText $l={0} $r={12} $s={15}>(36%)</IndicatorText>
          <VolumeX size={17} color="#77756d" fill="#77756d" />
          <IndicatorText $l={18} $r={14}>8:14 PM</IndicatorText>
          <SessionIco />
        </Indicators>
      </TopPanel>
      <Body>
        <Launcher>
          <Tile $bg="#8e8c55"><UbuntuGlyph /></Tile>
          <Tile $bg="#a09f7a"><FirefoxGlyph /></Tile>
          <Tile $bg="#a9a88f"><FilesGlyph /></Tile>
          <Tile $bg="#9d9c78"><ToolsGlyph /></Tile>
          <Tile $bg="#b1b1ab"><PipDots /><TerminalGlyph /></Tile>
          <Tile $bg="#878557"><WebGlyph /></Tile>
          <Tile $bg="#afafa9"><Pip $side="l" $hollow /><RvizMark><RvizBig>RV</RvizBig><RvizSmall>iz</RvizSmall></RvizMark></Tile>
          <Tile $bg="#b3b3ad"><Pip $side="l" /><Pip $side="r" /><RvizMark><RvizBig>RV</RvizBig><RvizSmall>iz</RvizSmall></RvizMark></Tile>
          <TrashTile $bg="#8f8e68"><TrashGlyph /></TrashTile>
        </Launcher>
        <Main>
          <Win>
            <TitleBar>
              <WinBtn $bg="#e5553a">×</WinBtn>
              <WinBtn $bg="#8a8880"><WinDash /></WinBtn>
              <WinBtn $bg="#8a8880"><WinSquare /></WinBtn>
              <WinTitle>frontier.rviz* - RViz</WinTitle>
            </TitleBar>
            <ToolBar>
              <Handle />
              <MoveBtn><IMove /><span>Move Camera</span></MoveBtn>
              {TOOLS.map(t => <Tool key={t.text} $w={t.w} $gap={t.gap}><t.icon /><span>{t.text}</span></Tool>)}
              <Tool $w={44}><IPlus /></Tool>
              <Tool $w={28} $gap={7}><IMinus /><IMenuDown /></Tool>
            </ToolBar>
            <Work>
              <Dock $w={362}>
                <DockTitle><IMonitor />Displays<CloseBtn>✖</CloseBtn></DockTitle>
                <Tree>
                  <ColLine $x={180} />
                  {DISPLAYS.map(d => (
                    <Row key={d.text} $sel={d.sel}>
                      <ArrowSlot><Arrow /></ArrowSlot>
                      <IconSlot><d.icon /></IconSlot>
                      <Label $c={d.color} $b={d.bold}>{d.text}</Label>
                      <CheckCell>
                        {d.box && <Box $on={d.box === "on"}>{d.box === "on" && <TickMark />}</Box>}
                        {d.sel && <Focus />}
                      </CheckCell>
                    </Row>
                  ))}
                </Tree>
                <Grip><GripMark /></Grip>
                <Help>
                  <HelpHead>Frontier Map</HelpHead>
                  <div>Displays an occupancy grid on the ground plane from</div>
                  <div>a nav_msgs::OccupancyGrid. <HelpLink>More Information</HelpLink>.</div>
                </Help>
                <BtnRow $pt={7} $pl={3}>
                  <Btn>Add</Btn><Btn>Duplicate</Btn><Btn>Remove</Btn><Btn>Rename</Btn>
                </BtnRow>
              </Dock>
              <Splitter $w={22}><SplitGrip /><SplitArrow $dir="l" /></Splitter>
              <Viewport><OccupancyMap /></Viewport>
              <Splitter $w={22}><SplitArrow $dir="r" /><SplitGrip /></Splitter>
              <Dock $w={271}>
                <DockTitle><ICam />Views<CloseBtn>✖</CloseBtn></DockTitle>
                <TypeRow>
                  <TypeLabel>Type:</TypeLabel>
                  <Combo>TopDownOrtho<Spin><SpinUp /><SpinDown /></Spin></Combo>
                  <Btn $h={24}>Zero</Btn>
                </TypeRow>
                <ViewTree>
                  <ColLine $x={134} />
                  <ViewHead>
                    <HeadArrowSlot><Arrow $down /></HeadArrowSlot>
                    <HeadCell $w={114}>Current View</HeadCell>
                    <HeadCell $w={135}>TopDownOrtho ...</HeadCell>
                  </ViewHead>
                  {VIEW_ROWS.map(([k, v]) => <ViewRow key={k}><ViewKey>{k}</ViewKey><ViewVal>{v}</ViewVal></ViewRow>)}
                </ViewTree>
                <BtnRow $pt={6} $pl={3}>
                  <Btn>Save</Btn><Btn>Remove</Btn><Btn>Rename</Btn>
                </BtnRow>
              </Dock>
            </Work>
            <Status>
              <Btn $w={50} $h={22}>Reset</Btn>
              <span>30 fps</span>
              <SizeGrip />
            </Status>
          </Win>
          <Bottom>
            <Wallpaper><WallpaperTexture /></Wallpaper>
            <Terminal>
              <Clipped>core service [/rosout] found</Clipped>
              <div>process[rviz-1]: started with pid [3284]</div>
              <Cursor />
            </Terminal>
          </Bottom>
        </Main>
      </Body>
    </Root>
  );
}
